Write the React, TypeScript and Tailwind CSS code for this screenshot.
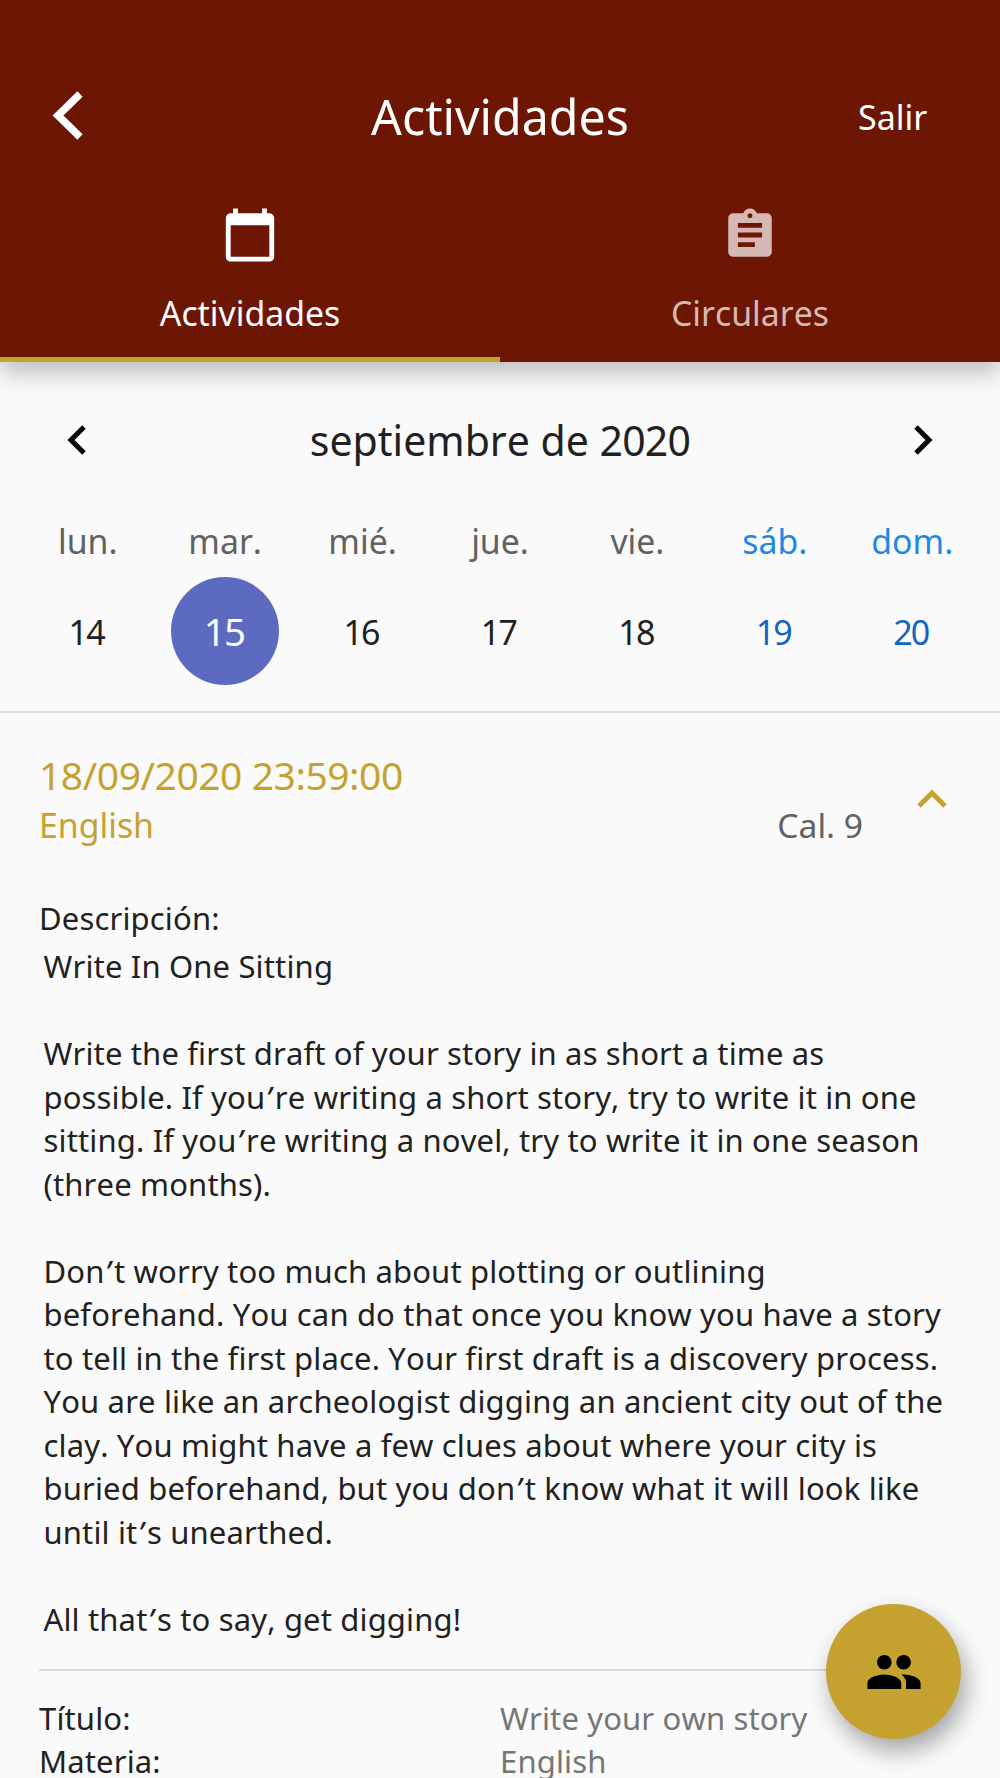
import { MdCalendarToday, MdAssignment, MdPeople } from "react-icons/md";
const days = [["lun.", "14"], ["mar.", "15"], ["mié.", "16"], ["jue.", "17"], ["vie.", "18"], ["sáb.", "19"], ["dom.", "20"]];
const description = [
  ["Write In One Sitting"],
  ["Write the first draft of your story in as short a time as", "possible. If you’re writing a short story, try to write it in one", "sitting. If you’re writing a novel, try to write it in one season", "(three months)."],
  ["Don’t worry too much about plotting or outlining", "beforehand. You can do that once you know you have a story", "to tell in the first place. Your first draft is a discovery process.", "You are like an archeologist digging an ancient city out of the", "clay. You might have a few clues about where your city is", "buried beforehand, but you don’t know what it will look like", "until it’s unearthed."],
  ["All that’s to say, get digging!"],
];
function Chevron({ d, className, width }: { d: string; className: string; width: number }) {
  return <svg className={className} fill="none" stroke="currentColor" strokeWidth={width}><path d={d} /></svg>;
}
// Gives each apostrophe a slant and a little room after it.
function Line({ text }: { text: string }) {
  const [before, after] = text.split("’");
  return <span className="block whitespace-nowrap">{before}{after !== undefined && <><span className="pl-[0.5px] pr-[3.5px] italic">’</span>{after}</>}</span>;
}
export default function App() {
  return (
    <div className="relative h-[1778px] w-[1000px] overflow-hidden bg-[#fafafa] font-['Noto_Sans',sans-serif] text-[#212121] [font-kerning:none]">
      <header className="relative h-[362px] bg-[#6e1604] pt-[72px] text-white shadow-[0_10px_24px_rgba(0,0,0,0.26)]">
        <div className="grid h-[90px] grid-cols-[200px_1fr_200px] items-center">
          <Chevron className="mb-[4px] ml-[50px] h-[50px] w-[36px]" d="M30 4L8 25.5L30 47" width={7.5} />
          <h1 className="pb-[2px] text-center text-[48.3px] leading-[88px]">Actividades</h1>
          <button className="pl-[58px] text-left text-[34px]">Salir</button>
        </div>
        <nav className="grid h-[200px] grid-cols-2">
          <button className="flex flex-col items-center border-b-[5px] border-[#c5a230] pt-[44px]"><MdCalendarToday size={58} /><span className="mt-[26px] text-[33.8px] leading-[46px]">Actividades</span></button>
          <button className="flex flex-col items-center pt-[44px] text-[#d4b9b4]"><MdAssignment size={58} /><span className="mt-[26px] text-[33.8px] leading-[46px]">Circulares</span></button>
        </nav>
      </header>
      <section className="h-[351px] border-b-2 border-[#dcdcdc] pt-[45px]">
        <div className="flex h-[68px] items-center justify-between px-[64px]">
          <Chevron className="mb-[2px] h-[30px] w-[24px] text-black" d="M20 2L7 15L20 28" width={5} />
          <span className="text-[41px]">septiembre de <span className="tracking-[-0.8px]">2020</span></span>
          <Chevron className="mb-[2px] h-[30px] w-[24px] text-black" d="M4 2L17 15L4 28" width={5} />
        </div>
        <div className="mx-[19px] mt-[44px] grid grid-cols-7 text-center">
          {days.map(([name, number], index) => (
            <div key={name} className="flex flex-col items-center">
              <span className={index > 4 ? "text-[33.8px] leading-[44px] text-[#1e88e5]" : "text-[33.8px] leading-[44px] text-[#616161]"}>{name}</span>
              <span className={index === 1 ? "mt-[14px] size-[108px] rounded-full bg-[#5c6bc0] pr-[2px] text-[38.5px] leading-[108px] tracking-[-1.6px] text-[#fafafa]" : index > 4 ? "mt-[14px] pr-[3px] text-[34px] leading-[111px] tracking-[-1.8px] text-[#1565c0]" : "mt-[14px] pr-[3px] text-[34px] leading-[111px] tracking-[-1.8px]"}>{number}</span>
            </div>
          ))}
        </div>
      </section>
      <main>
        <div className="flex h-[175px] pl-[39px] pr-[53px] pt-[37px]">
          <div className="flex-1 text-[#c5a230]"><p className="text-[39px] leading-[50px] tracking-[-0.45px]">18/09/2020 23:59:00</p><p className="text-[33.8px] leading-[51px]">English</p></div>
          <span className="mt-[50px] text-[33.6px] leading-[51px] text-[#616161]">Cal. 9</span>
          <Chevron className="mt-[39px] ml-[54px] h-[20px] w-[30px] text-[#c5a230]" d="M2 17L15 4L28 17" width={5} />
        </div>
        <p className="ml-[39px] mt-[8px] text-[31px] leading-[44px] tracking-[0.16px]">Descripción:</p>
        <div className="ml-[43.5px] mt-[5px] text-[31px] leading-[43.5px] tracking-[0.15px]">
          {description.map((paragraph, index) => <p key={index} className="mb-[43.5px]">{paragraph.map((line) => <Line key={line} text={line} />)}</p>)}
        </div>
        <div className="mx-[39px] -mt-[16px] border-t-2 border-[#dcdcdc] pt-[26px] text-[31px] leading-[43.5px] tracking-[0.14px]">
          <div className="grid grid-cols-2"><span>Título:</span><span className="text-[#757575]">Write your own story</span><span>Materia:</span><span className="text-[#757575]">English</span></div>
        </div>
      </main>
      <button className="absolute left-[826px] top-[1604px] flex size-[135px] items-center justify-center rounded-full bg-[#c5a230] text-black shadow-[5px_12px_24px_rgba(0,0,0,0.35)]"><MdPeople size={58} /></button>
    </div>
  );
}
